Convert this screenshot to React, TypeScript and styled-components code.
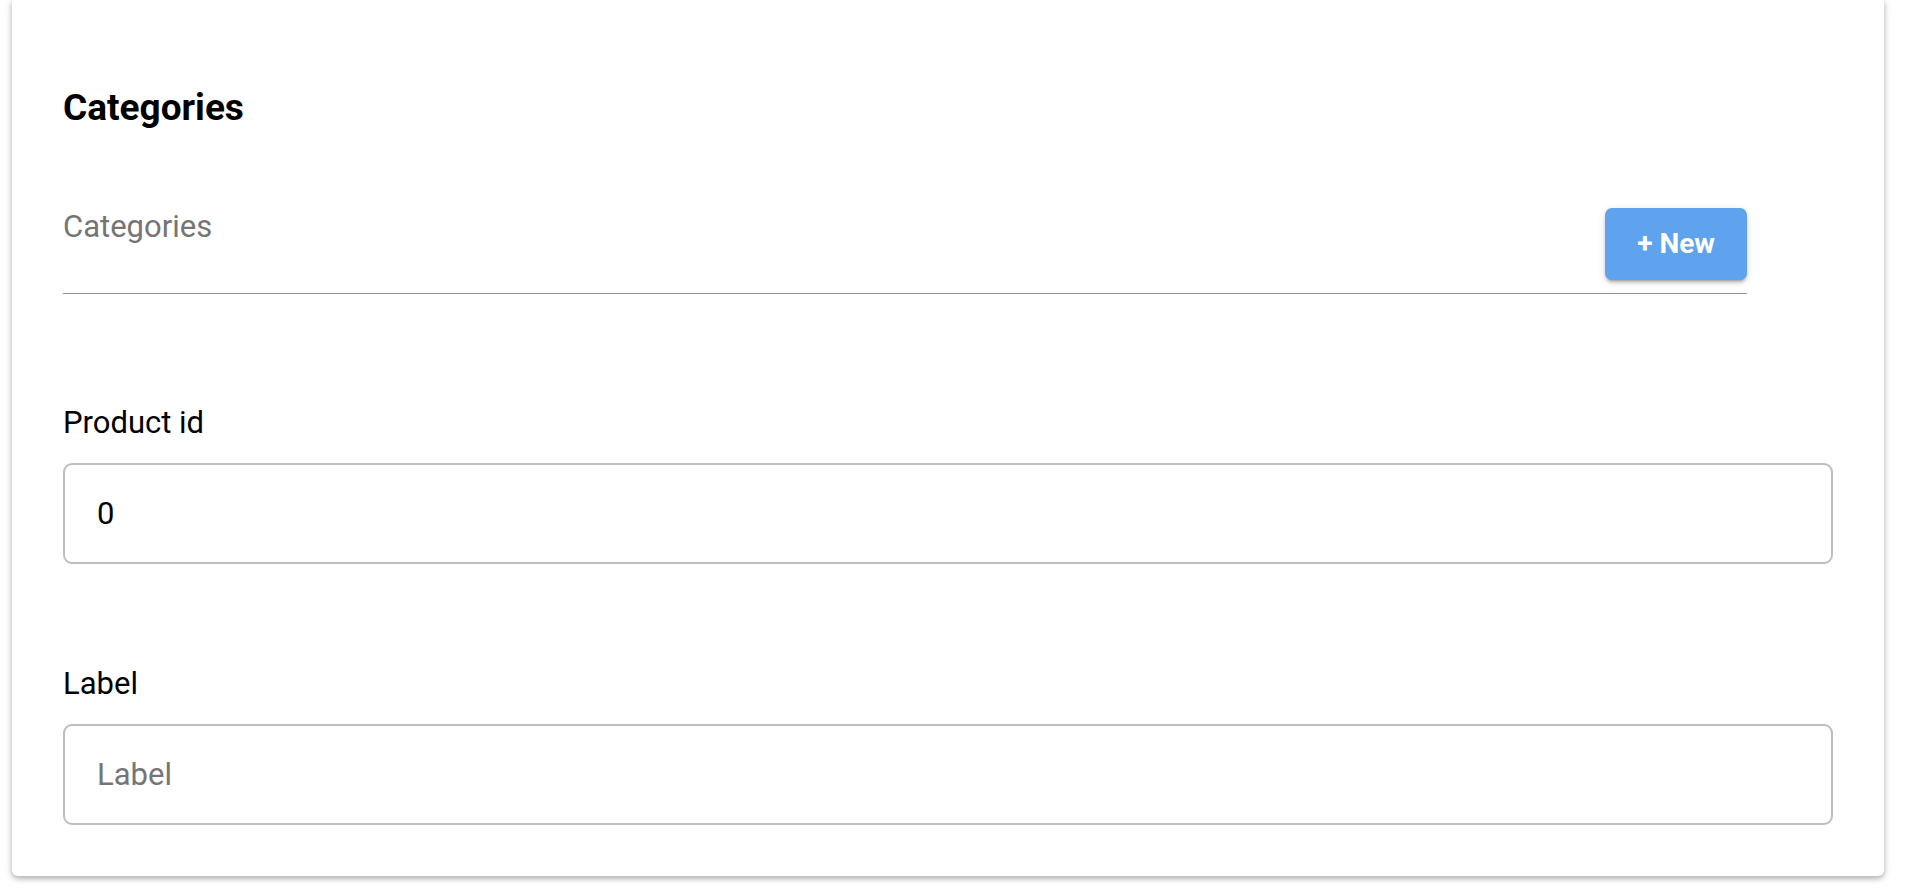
import React from 'react'
import styled, { createGlobalStyle } from 'styled-components'

const GlobalStyle = createGlobalStyle`
  html, body {
    margin: 0;
    padding: 0;
    background: #ffffff;
    font-family: Roboto, "Liberation Sans", Arial, sans-serif;
  }
`

const Page = styled.div`
  padding: 0 24px 0 12px;
  height: 896px;
  box-sizing: border-box;
  overflow: hidden;
`

const Card = styled.section`
  width: 1872px;
  box-sizing: border-box;
  background: #fff;
  padding: 86px 51px 51px;
  border-radius: 0 0 6px 6px;
  box-shadow: 0 3px 5px rgba(0, 0, 0, 0.22), 0 1px 10px rgba(0, 0, 0, 0.14);
`

const Title = styled.h2`
  margin: 0;
  font-size: 37px;
  line-height: 44px;
  font-weight: 700;
  color: #000;
`

const CategoryField = styled.div`
  margin-top: 78px;
  width: 1684px;
  display: flex;
  justify-content: space-between;
  align-items: flex-start;
  padding-bottom: 13px;
  border-bottom: 1.5px solid #949494;
`

const Placeholder = styled.span`
  margin-top: 1px;
  font-size: 31px;
  line-height: 36px;
  color: #757575;
`

const NewButton = styled.button`
  width: 142px;
  height: 72px;
  padding: 0 0 2px;
  border: none;
  border-radius: 7px;
  background: #5fa3ef;
  color: #fff;
  font-family: Roboto, "Liberation Sans", Arial, sans-serif;
  font-size: 28px;
  font-weight: 700;
  box-shadow: 0 4px 2px -3px rgba(0, 0, 0, 0.2), 0 3px 3px 0 rgba(0, 0, 0, 0.14),
    0 2px 8px 0 rgba(0, 0, 0, 0.12);
  cursor: pointer;
`

const Field = styled.div<{ $gap: number }>`
  margin-top: ${(p) => p.$gap}px;
  display: flex;
  flex-direction: column;
  gap: 22px;
`

const FieldLabel = styled.label`
  font-size: 31px;
  line-height: 36px;
  color: #000;
`

const TextInput = styled.input`
  height: 101px;
  box-sizing: border-box;
  border: 2px solid #bdbdbd;
  border-radius: 9px;
  padding: 0 32px;
  font-family: Roboto, "Liberation Sans", Arial, sans-serif;
  font-size: 31px;
  color: #000;
  outline: none;
  background: #fff;

  &::placeholder {
    color: #757575;
  }
`

export default function App() {
  return (
    <>
      <GlobalStyle />
      <Page>
        <Card>
          <Title>Categories</Title>
          <CategoryField>
            <Placeholder>Categories</Placeholder>
            <NewButton>+ New</NewButton>
          </CategoryField>
          <Field $gap={111}>
            <FieldLabel>Product id</FieldLabel>
            <TextInput defaultValue="0" />
          </Field>
          <Field $gap={102}>
            <FieldLabel>Label</FieldLabel>
            <TextInput placeholder="Label" />
          </Field>
        </Card>
      </Page>
    </>
  )
}
